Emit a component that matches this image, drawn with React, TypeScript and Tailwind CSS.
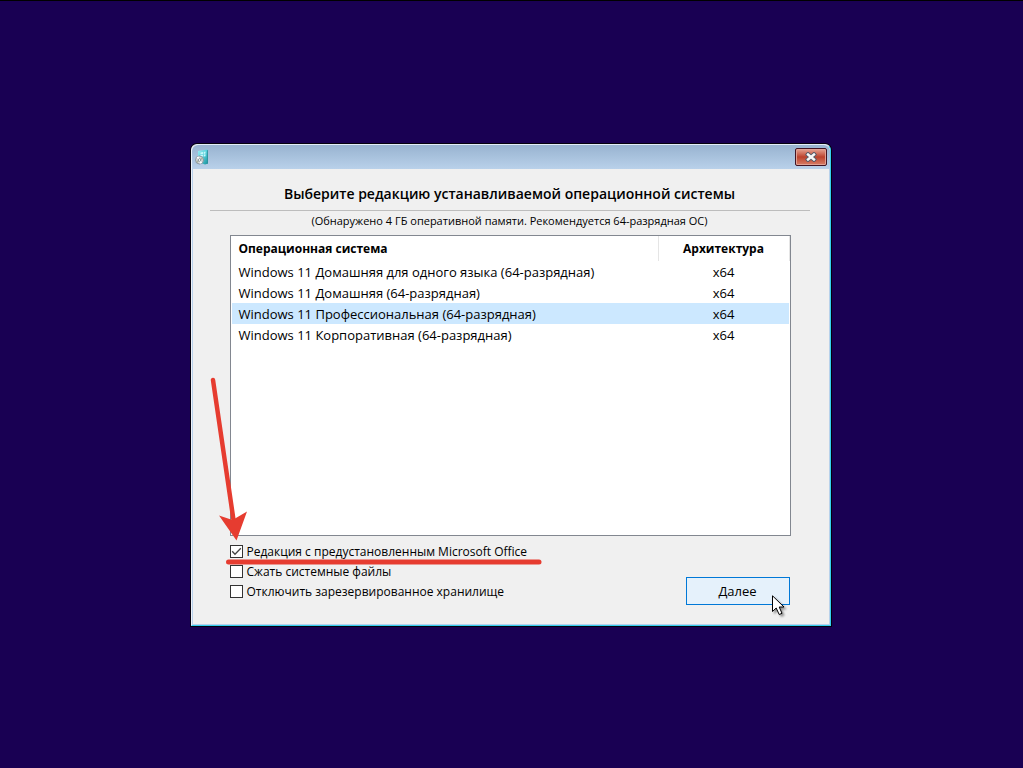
import { useState } from "react";

const editions = [
  "Windows 11 Домашняя для одного языка (64-разрядная)",
  "Windows 11 Домашняя (64-разрядная)",
  "Windows 11 Профессиональная (64-разрядная)",
  "Windows 11 Корпоративная (64-разрядная)",
];

function InstallerIcon() {
  return (
    <svg width="14" height="16" viewBox="0 0 14 16" aria-hidden="true">
      <defs>
        <linearGradient id="box" x1="0" y1="0" x2="1" y2="1">
          <stop offset="0" stopColor="#9beef4" />
          <stop offset="0.5" stopColor="#55cdd8" />
          <stop offset="1" stopColor="#168e98" />
        </linearGradient>
      </defs>
      <path d="M3 2 12 0.5 13 1.5V14.5L10 15.5 3 13Z" fill="url(#box)" />
      <path d="M12.2 0.7 13 1.5V14.5L12.2 14.8Z" fill="#2b8f9c" />
      <path d="M5.5 3.5 8 3V5L5.5 5.3ZM8.7 3 10.5 2.6V4.6L8.7 4.9ZM5.5 6 8 5.7V7.5L5.5 7.7ZM8.7 5.6 10.5 5.3V7.2L8.7 7.4Z" fill="#c8f8fb" />
      <circle cx="4.5" cy="11" r="4" fill="#d5d8da" stroke="#7e8b94" strokeWidth="0.8" />
      <path d="M4.5 11 1.5 8.5 3.5 7.3ZM4.5 11 7.3 13.8 5 14.8Z" fill="#fff" />
      <path d="M4.5 11 7 8 8.2 10ZM4.5 11 1 12 2.5 14.2Z" fill="#a9b3a2" />
      <circle cx="4.5" cy="11" r="1.3" fill="#fff" stroke="#65727a" strokeWidth="0.7" />
    </svg>
  );
}

function CloseGlyph() {
  return (
    <svg width="12" height="10" viewBox="0 0 12 10" fill="none" strokeLinecap="square" aria-hidden="true">
      <path d="M3 2.500 9 7.500M9 2.500 3 7.500" stroke="#565a68" strokeWidth="4.400" />
      <path d="M3 2.500 9 7.500M9 2.500 3 7.500" stroke="#f7f7f7" strokeWidth="2.400" />
    </svg>
  );
}

function Option({ label, initial = false }: { label: string; initial?: boolean }) {
  const [checked, setChecked] = useState(initial);
  return (
    <label className="flex h-5 items-center gap-1 text-[12px] leading-5">
      <span className="grid shrink-0">
        <input
          type="checkbox"
          checked={checked}
          onChange={() => setChecked(!checked)}
          className="col-start-1 row-start-1 size-[13px] appearance-none border border-[#333333] bg-white"
        />
        {checked && (
          <svg width="13" height="13" viewBox="0 0 13 13" className="pointer-events-none col-start-1 row-start-1" aria-hidden="true">
            <path d="M2.200 6.300 5 9.200 10.800 3.300" fill="none" stroke="#444" strokeWidth="1.300" />
          </svg>
        )}
      </span>
      {label}
    </label>
  );
}

export default function App() {
  const [selected, setSelected] = useState(2);
  return (
    <main className="flex min-h-screen items-center justify-center border-t border-black bg-[#190053] pr-0.5 font-['Open_Sans','Noto_Sans',sans-serif] text-black">
      <section className="relative w-full max-w-[640px] rounded-t-md border border-t-[#e4eef7] border-r-[#35cfee] border-b-[#35cfee] border-l-[#eef3fa] bg-[#f0f0f0] shadow-[0_0_0_1px_#05010f]">
        <header className="flex h-6 items-center justify-between rounded-t-md bg-linear-to-b from-[#98b3d0] to-[#b9d1ea] px-[3px]">
          <InstallerIcon />
          <button
            type="button"
            aria-label="Закрыть"
            className="flex h-[18px] w-8 items-center justify-center rounded-xs border border-[#431422] bg-linear-to-b from-[#e5a394] from-0% via-[#bb412c] via-50% to-[#d87d66] shadow-[inset_0_0_0_1px_#e0a193]"
          >
            <CloseGlyph />
          </button>
        </header>

        <div className="border-x border-b border-[#b9d1ea] pt-[13px] pr-[19px] pb-[19px] pl-[17px]">
          <h1 className="border-b border-[#bdbdbd] pb-1 text-center text-[14px] leading-6 font-semibold">
            Выберите редакцию устанавливаемой операционной системы
          </h1>
          <p className="text-center text-[11px] leading-5">
            (Обнаружено 4 ГБ оперативной памяти. Рекомендуется 64-разрядная ОС)
          </p>

          <div className="mr-[19px] ml-5 mt-1 min-h-[301px] border border-[#828790] bg-white pl-px">
            <table className="w-full table-fixed border-collapse text-[13px] leading-5">
              <colgroup>
                <col />
                <col className="w-[131px]" />
              </colgroup>
              <thead className="text-[12px]">
                <tr className="h-[25px]">
                  <th className="border-r border-[#e5e5e5] px-[7px] pt-0.5 text-left font-bold">Операционная система</th>
                  <th className="border-r border-[#e5e5e5] pt-0.5 text-center font-bold">Архитектура</th>
                </tr>
              </thead>
              <tbody>
                {editions.map((name, i) => (
                  <tr
                    key={name}
                    onClick={() => setSelected(i)}
                    aria-selected={i === selected}
                    className={i === selected ? "h-[21px] bg-[#cce8ff]" : "h-[21px]"}
                  >
                    <td className="px-[7px] pt-px">{name}</td>
                    <td className="pt-px text-center">x64</td>
                  </tr>
                ))}
              </tbody>
            </table>
          </div>

          <div className="mx-5 mt-1.5 flex h-[63px] items-end justify-between">
            <div className="self-start">
              <Option label="Редакция с предустановленным Microsoft Office" initial />
              <Option label="Сжать системные файлы" />
              <Option label="Отключить зарезервированное хранилище" />
            </div>
            <button type="button" className="h-7 w-[104px] border border-[#0078d7] bg-[#e5f1fb] text-[13px] leading-5">
              Далее
            </button>
          </div>
        </div>

        <svg
          className="pointer-events-none absolute top-[225px] left-[25px]"
          width="340"
          height="210"
          viewBox="217 370 340 210"
          overflow="visible"
          aria-hidden="true"
        >
          <path d="M213 380 233.500 520" stroke="#e63c30" strokeWidth="4.500" strokeLinecap="round" />
          <path d="M236.500 540.500 219 515.500 232.500 520 247 511.500Z" fill="#e63c30" />
          <path d="M228.500 562H539" stroke="#e63c30" strokeWidth="5" strokeLinecap="round" />
        </svg>
        <svg
          className="pointer-events-none absolute top-[450px] left-[580px] drop-shadow-[2px_2px_1px_#00000066]"
          width="13"
          height="21"
          viewBox="0 0 13 21"
          aria-hidden="true"
        >
          <path d="M.5 .8V16.500L4.200 13 7.200 19.500 10 18.300 7.200 12H12Z" fill="#fff" stroke="#000" strokeWidth="1" />
        </svg>
      </section>
    </main>
  );
}
